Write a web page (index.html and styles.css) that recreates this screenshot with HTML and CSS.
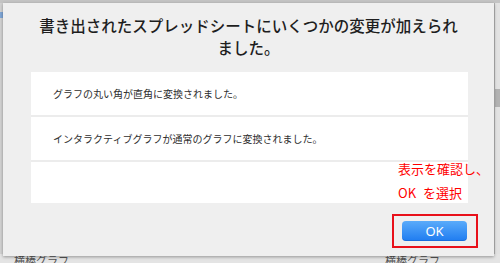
FILE: index.html
```html
<!DOCTYPE html>
<html lang="ja">
<head>
<meta charset="utf-8">
<link rel="stylesheet" href="styles.css">
</head>
<body>
<div class="app">
  <div class="rail-left"><span class="rail-mark"></span></div>
  <div class="app-main"></div>
  <div class="rail-right"><span class="scroll-thumb"></span></div>
  <div class="app-bottom">
    <span class="bg-label">横棒グラフ</span>
    <span class="bg-label bg-label-right">横棒グラフ</span>
  </div>

  <div class="dialog">
    <h1 class="dialog-title">書き出されたスプレッドシートにいくつかの変更が加えられ<br>ました。</h1>
    <ul class="changes">
      <li class="change">グラフの丸い角が直角に変換されました。</li>
      <li class="change">インタラクティブグラフが通常のグラフに変換されました。</li>
      <li class="change change-empty"></li>
    </ul>
    <div class="dialog-footer">
      <span class="highlight"><button class="ok-button">OK</button></span>
    </div>
  </div>

  <p class="note">表示を確認し、<br>OK<span class="gap"> </span>を選択</p>
</div>
</body>
</html>
```
FILE: styles.css
```css
* { box-sizing: border-box; }
html, body { margin: 0; padding: 0; }
body {
  width: 500px;
  height: 263px;
  overflow: hidden;
  font-family: "Noto Sans CJK JP", "Noto Sans", sans-serif;
  background: #d8d8d8;
}
.app {
  position: relative;
  width: 500px;
  height: 263px;
  display: grid;
  grid-template-columns: 3px 1fr 6px;
  grid-template-rows: 1fr 9px;
  background: #dcdcdc;
  border-top: 3px solid #c4c4c4;
}
.rail-left {
  background: #d2d2d2;
  padding-top: 9px;
}
.rail-mark {
  display: block;
  width: 3px;
  height: 6px;
  background: #7fa6d6;
}
.app-main { background: #dcdcdc; }
.rail-right {
  background: #e2e2e2;
  border-left: 1px solid #b4b4b4;
  padding-top: 86px;
}
.scroll-thumb {
  display: block;
  width: 5px;
  height: 18px;
  background: #b2b2b2;
}
.app-bottom {
  grid-column: 1 / 4;
  background: #e4e4e4;
  display: flex;
  padding-left: 14px;
  overflow: hidden;
}
.bg-label {
  font-size: 11px;
  line-height: 11px;
  color: #555;
  margin-top: 1px;
}
.bg-label-right { margin-left: 316px; }

.dialog {
  position: absolute;
  left: 3px;
  top: 0;
  width: 491px;
  height: 253px;
  background: #efefef;
  box-shadow: 0 1px 3px rgba(0,0,0,0.35);
  padding-top: 11px;
  display: flex;
  flex-direction: column;
}
.dialog-title {
  margin: 0;
  font-size: 15.5px;
  line-height: 22px;
  font-weight: 500;
  color: #1e1e1e;
  text-align: center;
}
.changes {
  list-style: none;
  margin: 14px 26px 0 28px;
  padding: 0;
  display: flex;
  flex-direction: column;
  gap: 2px;
  background: #ececec;
}
.change {
  height: 43px;
  display: flex;
  align-items: center;
  padding-left: 22px;
  background: #fff;
  font-size: 10px;
  color: #2e2e2e;
  white-space: nowrap;
}
.change-empty { height: 41px; }
.dialog-footer {
  display: flex;
  justify-content: flex-end;
  padding-top: 11px;
  padding-right: 16px;
}
.highlight {
  display: block;
  border: 2px solid #e8101a;
  padding: 5px 9px 5px 8px;
}
.ok-button {
  display: block;
  width: 65px;
  height: 20px;
  border: none;
  border-radius: 4px;
  background: linear-gradient(#5aabfa, #1f7cf0);
  box-shadow: inset 0 -1px 0 rgba(0,60,160,0.25);
  color: #fff;
  font-family: "Noto Sans", "Liberation Sans", sans-serif;
  font-size: 13px;
  line-height: 20px;
  padding: 0;
}
.note {
  position: absolute;
  left: 398px;
  top: 154px;
  margin: 0;
  font-size: 13px;
  line-height: 24px;
  color: #ff0000;
  white-space: nowrap;
}
.gap {
  display: inline-block;
  width: 7px;
}
```
